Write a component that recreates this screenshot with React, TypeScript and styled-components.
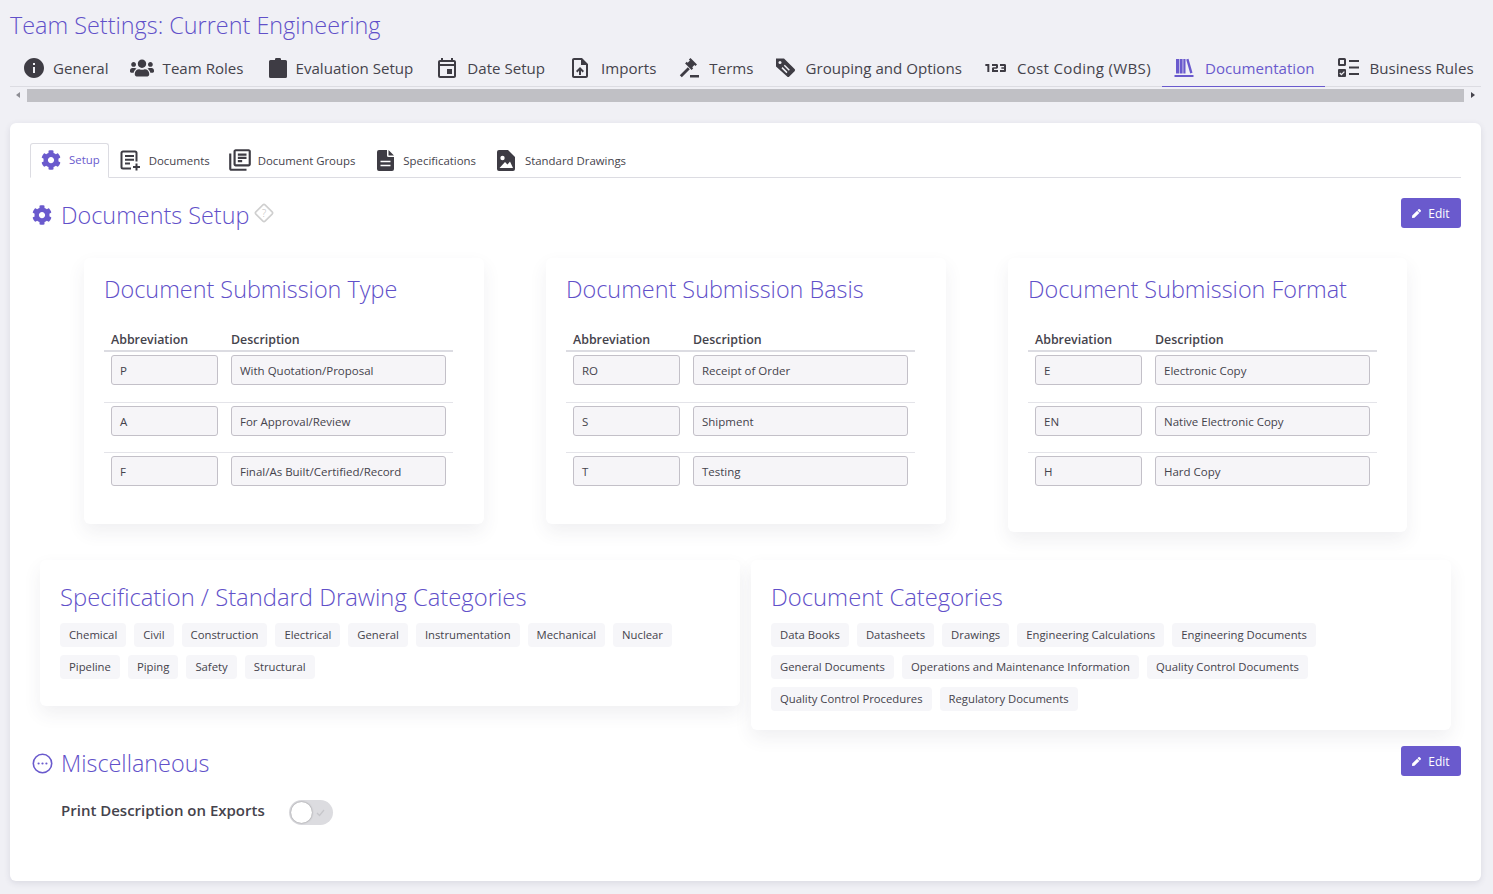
import { ReactNode } from "react";
import styled, { createGlobalStyle } from "styled-components";
import { FaCog, FaUsers, FaPen } from "react-icons/fa";
import { MdInfo, MdOutlineEvent, MdOutlineUploadFile, MdOutlineLibraryBooks, Md123 } from "react-icons/md";

const PURPLE = "#6a5acd";
const TITLE = "#6150c9";
const INK = "#45434c";
const ICON = "#3e3c44";

const GlobalStyle = createGlobalStyle`
  html, body {
    margin: 0;
    height: 100%;
    overflow: hidden;
    background: #f0f0f5;
    font-family: "Open Sans", "Noto Sans", sans-serif;
    color: ${INK};
  }
  * { box-sizing: border-box; }
`;

const Page = styled.div`
  display: flex;
  flex-direction: column;
  height: 894px;
  padding: 10px 12px 0 10px;
`;
const PageTitle = styled.h1`
  margin: 0;
  height: 40px;
  font-size: 23.4px;
  line-height: 31px;
  font-weight: 300;
  color: ${TITLE};
`;
const TopTabs = styled.div`
  display: flex;
  height: 37px;
  padding-left: 2px;
  border-bottom: 1px solid #dcdce2;
`;
const TopTab = styled.div<{ $active?: boolean; $track?: number }>`
  display: flex;
  align-items: center;
  gap: 9px;
  height: 37px;
  padding: 0 11px 1px;
  font-size: 15.1px;
  letter-spacing: ${(p) => p.$track ?? 0}px;
  white-space: nowrap;
  color: ${(p) => (p.$active ? PURPLE : INK)};
  border-bottom: 1px solid ${(p) => (p.$active ? PURPLE : "transparent")};
`;
const IconSlot = styled.span<{ $w: number }>`
  display: flex;
  flex: none;
  align-items: center;
  justify-content: center;
  width: ${(p) => p.$w}px;
  svg { flex: none; }
`;
const ScrollBar = styled.div`
  display: flex;
  align-items: center;
  gap: 7px;
  height: 14px;
  margin: 1px 0 21px;
  padding: 0 6px;
`;
const ScrollArrow = styled.span<{ $right?: boolean }>`
  width: 0;
  height: 0;
  border-top: 3px solid transparent;
  border-bottom: 3px solid transparent;
  border-left: ${(p) => (p.$right ? "4px solid #45434c" : "none")};
  border-right: ${(p) => (p.$right ? "none" : "4px solid #8d8d94")};
`;
const ScrollThumb = styled.div`
  flex: 1;
  height: 13px;
  background: #c0c0c5;
`;
const MainCard = styled.main`
  height: 758px;
  padding: 20px 20px 0;
  background: #fff;
  border-radius: 6px;
  box-shadow: 0 2px 6px rgba(60, 60, 90, 0.12);
`;
const SubTabs = styled.div`
  display: flex;
  height: 35px;
  border-bottom: 1px solid #dcdce2;
`;
const SubTab = styled.div<{ $active?: boolean }>`
  display: flex;
  align-items: center;
  gap: 8px;
  height: 35px;
  padding: 0 8px 2px 10px;
  font-size: 11.4px;
  white-space: nowrap;
  color: ${(p) => (p.$active ? PURPLE : INK)};
  border: 1px solid ${(p) => (p.$active ? "#dcdce2" : "transparent")};
  border-bottom: ${(p) => (p.$active ? "1px solid #fff" : "0")};
  border-radius: 3px 3px 0 0;
`;
const SectionHead = styled.div<{ $top: number }>`
  display: flex;
  align-items: flex-start;
  justify-content: space-between;
  height: 30px;
  margin-top: ${(p) => p.$top}px;
`;
const SectionTitle = styled.h2`
  display: flex;
  align-items: center;
  margin: 0;
  padding-top: 2px;
  font-size: 23.4px;
  line-height: 30px;
  font-weight: 300;
  color: ${TITLE};
`;
const EditButton = styled.button`
  display: flex;
  align-items: center;
  justify-content: center;
  gap: 7px;
  width: 60px;
  height: 30px;
  padding: 0;
  border: 0;
  border-radius: 3px;
  background: ${PURPLE};
  color: #fff;
  font-family: inherit;
  font-size: 12px;
`;
const TableCards = styled.div`
  display: flex;
  align-items: flex-start;
  gap: 62px;
  margin: 30px 0 0 54px;
`;
const Card = styled.section<{ $width: number; $height: number; $pad: number }>`
  flex: none;
  width: ${(p) => p.$width}px;
  height: ${(p) => p.$height}px;
  padding: ${(p) => p.$pad}px 20px 0;
  background: #fff;
  border-radius: 6px;
  box-shadow: 0 8px 18px rgba(60, 60, 90, 0.08);
`;
const CardTitle = styled.h3<{ $size: number }>`
  margin: 0;
  font-size: ${(p) => p.$size}px;
  line-height: 32px;
  font-weight: 300;
  color: ${TITLE};
`;
const TableHead = styled.div`
  display: grid;
  grid-template-columns: 120px 1fr;
  width: 349px;
  height: 23px;
  margin-top: 24px;
  padding: 2px 0 0 7px;
  border-bottom: 2px solid #dcdce2;
  font-size: 12.4px;
  line-height: 18px;
  font-weight: 600;
`;
const Row = styled.div`
  display: grid;
  grid-template-columns: 107px 215px;
  column-gap: 13px;
  width: 349px;
  height: 50px;
  padding: 3px 7px 0;
  & + & { border-top: 1px solid #e4e4e9; }
`;
const Field = styled.div`
  height: 30px;
  padding: 0 8px;
  font-size: 11.5px;
  line-height: 29px;
  background: #f6f5f8;
  border: 1px solid #c3c0c8;
  border-radius: 3px;
`;
const ChipCards = styled.div`
  display: flex;
  align-items: flex-start;
  gap: 11px;
  margin: 28px 0 0 10px;
`;
const Chips = styled.div`
  display: flex;
  flex-wrap: wrap;
  gap: 8px;
  margin-top: 10px;
`;
const Chip = styled.span`
  height: 24px;
  padding: 0 9px;
  font-size: 11.3px;
  line-height: 24px;
  white-space: nowrap;
  background: #f6f6f9;
  border-radius: 4px;
`;
const Setting = styled.div`
  display: flex;
  align-items: flex-start;
  gap: 24px;
  margin: 24px 0 0 31px;
`;
const SettingLabel = styled.span`
  font-size: 15px;
  line-height: 20px;
  font-weight: 600;
`;
const Toggle = styled.span`
  position: relative;
  display: block;
  width: 44px;
  height: 25px;
  background: #dcdce0;
  border-radius: 13px;
`;
const Knob = styled.span`
  position: absolute;
  left: 2px;
  top: 2px;
  width: 21px;
  height: 21px;
  background: #fff;
  border-radius: 50%;
  box-shadow: 0 0 2px rgba(0, 0, 0, 0.45);
`;
const ToggleCheck = styled.svg`
  position: absolute;
  right: 8px;
  top: 9px;
`;

const ClipboardIcon = () => (
  <svg width="18" height="20" viewBox="0 0 18 20" fill={ICON} style={{ marginLeft: 3 }}>
    <path d="M1.5 2H6V1.2A1.2 1.2 0 0 1 7.2 0h3.6A1.2 1.2 0 0 1 12 1.2V2h4.5A1.5 1.5 0 0 1 18 3.5v15a1.5 1.5 0 0 1-1.5 1.5h-15A1.5 1.5 0 0 1 0 18.5v-15A1.5 1.5 0 0 1 1.5 2z" />
  </svg>
);
const GavelIcon = () => (
  <svg width="21" height="21" viewBox="0 0 21 21" fill={ICON}>
    <path d="M11.500 1l6.500 6.500-1.600 1.600-1-1-2.200 2.200 1 1-1.600 1.600-6.500-6.500 1.600-1.600 1 1 2.200-2.200-1-1z" />
    <path d="M8.800 10.200l2 2-8 8-2-2zM11 18h9v2.500h-9z" />
  </svg>
);
const TagIcon = () => (
  <svg width="21" height="21" viewBox="0 0 21 21" fill={ICON}>
    <path d="M1 1.500h8l10.600 10.600a1.600 1.600 0 0 1 0 2.200l-5.300 5.300a1.600 1.600 0 0 1-2.200 0L1 9.500z" />
    <circle cx="5" cy="5.500" r="1.500" fill="#f0f0f5" />
    <path d="M9.300 8.300l5 5M7 10.600l5 5" stroke="#f0f0f5" strokeWidth="1.500" />
  </svg>
);
const BooksIcon = () => (
  <svg width="20" height="20" viewBox="0 0 20 20" fill={PURPLE}>
    <rect x="2" y="1" width="3" height="14.500" />
    <rect x="5.600" y="1" width="3" height="14.500" />
    <path d="M9.300 1h2.200v14.500H9.300zM12.200 1.400l2.300-.7 4 14.100-2.300.7z" />
    <rect x="0.500" y="17" width="19" height="2" />
  </svg>
);
const RulesIcon = () => (
  <svg width="21" height="19" viewBox="0 0 21 19">
    <rect x="1" y="1" width="6" height="6" rx="0.500" fill="none" stroke={ICON} strokeWidth="2" />
    <rect x="0" y="11" width="8" height="8" rx="1" fill={ICON} />
    <path d="M1.800 15l1.600 1.600 3-3" fill="none" stroke="#f0f0f5" strokeWidth="1.300" />
    <path d="M11 3h10M11 9.500h10M11 16h10" stroke={ICON} strokeWidth="2" />
  </svg>
);
const DocAddIcon = () => (
  <svg width="21" height="21" viewBox="0 0 21 21" fill="none" stroke={ICON} strokeWidth="2">
    <path d="M11 18.500H3a1.500 1.500 0 0 1-1.500-1.500V3A1.500 1.500 0 0 1 3 1.500h12A1.500 1.500 0 0 1 16.500 3v8.500" />
    <path d="M5 6h9M5 9.800h9M5 13.500h5M16.500 13.500v7M13 17h7" />
  </svg>
);
const FileLinesIcon = () => (
  <svg width="17" height="21" viewBox="0 0 17 21" fill={ICON}>
    <path d="M2 0h8v5.500A1.500 1.500 0 0 0 11.500 7H17v12a2 2 0 0 1-2 2H2a2 2 0 0 1-2-2V2a2 2 0 0 1 2-2zM11.500 0L17 5.500h-5.500z" />
    <path d="M3.500 11.500h10M3.500 15.500h10" stroke="#fff" strokeWidth="1.700" />
  </svg>
);
const DrawingIcon = () => (
  <svg width="18" height="21" viewBox="0 0 18 21" fill={ICON}>
    <path d="M2 0h9l7 7v12a2 2 0 0 1-2 2H2a2 2 0 0 1-2-2V2a2 2 0 0 1 2-2z" />
    <circle cx="5.500" cy="8" r="2.200" fill="#fff" />
    <path d="M2.500 18l5.500-6 2.500 2.500 2.500-3 3 6.500z" fill="#fff" />
  </svg>
);
const HelpIcon = () => (
  <svg width="22" height="22" viewBox="0 0 22 22" style={{ marginLeft: 4, marginTop: -5 }}>
    <rect x="4.500" y="4.500" width="13" height="13" rx="1.500" transform="rotate(45 11 11)" fill="none" stroke="#cfcfcf" strokeWidth="1.600" />
    <text x="11" y="14.500" textAnchor="middle" fontSize="10" fill="#b9b9b9">?</text>
  </svg>
);
const MoreIcon = () => (
  <svg width="21" height="21" viewBox="0 0 21 21" fill={PURPLE}>
    <circle cx="10.500" cy="10.500" r="9.200" fill="none" stroke={PURPLE} strokeWidth="1.600" />
    <circle cx="6.600" cy="10.500" r="1.100" />
    <circle cx="10.500" cy="10.500" r="1.100" />
    <circle cx="14.400" cy="10.500" r="1.100" />
  </svg>
);

const topTabs: { label: string; icon: ReactNode; slot: number; track?: number; active?: boolean }[] = [
  { label: "General", slot: 21, icon: <MdInfo size={24} color={ICON} /> },
  { label: "Team Roles", slot: 23, icon: <FaUsers size={24} color={ICON} /> },
  { label: "Evaluation Setup", slot: 21, icon: <ClipboardIcon /> },
  { label: "Date Setup", slot: 23, icon: <MdOutlineEvent size={24} color={ICON} /> },
  { label: "Imports", slot: 25, icon: <MdOutlineUploadFile size={24} color={ICON} /> },
  { label: "Terms", slot: 22, icon: <GavelIcon /> },
  { label: "Grouping and Options", slot: 21, icon: <TagIcon /> },
  { label: "Cost Coding (WBS)", slot: 24, track: 0.3, icon: <Md123 size={32} color={ICON} /> },
  { label: "Documentation", slot: 23, icon: <BooksIcon />, active: true },
  { label: "Business Rules", slot: 24, icon: <RulesIcon /> },
];

const subTabs: { label: string; icon: ReactNode; slot: number; active?: boolean }[] = [
  { label: "Setup", slot: 20, icon: <FaCog size={20} color={PURPLE} />, active: true },
  { label: "Documents", slot: 21, icon: <DocAddIcon /> },
  { label: "Document Groups", slot: 20, icon: <MdOutlineLibraryBooks size={26} color={ICON} /> },
  { label: "Specifications", slot: 20, icon: <FileLinesIcon /> },
  { label: "Standard Drawings", slot: 21, icon: <DrawingIcon /> },
];

const submissionCards = [
  {
    title: "Document Submission Type",
    width: 400,
    height: 266,
    rows: [
      ["P", "With Quotation/Proposal"],
      ["A", "For Approval/Review"],
      ["F", "Final/As Built/Certified/Record"],
    ],
  },
  {
    title: "Document Submission Basis",
    width: 400,
    height: 266,
    rows: [
      ["RO", "Receipt of Order"],
      ["S", "Shipment"],
      ["T", "Testing"],
    ],
  },
  {
    title: "Document Submission Format",
    width: 399,
    height: 274,
    rows: [
      ["E", "Electronic Copy"],
      ["EN", "Native Electronic Copy"],
      ["H", "Hard Copy"],
    ],
  },
];

const specCategories = [
  "Chemical", "Civil", "Construction", "Electrical", "General", "Instrumentation",
  "Mechanical", "Nuclear", "Pipeline", "Piping", "Safety", "Structural",
];
const docCategories = [
  "Data Books", "Datasheets", "Drawings", "Engineering Calculations", "Engineering Documents",
  "General Documents", "Operations and Maintenance Information", "Quality Control Documents",
  "Quality Control Procedures", "Regulatory Documents",
];

export default function App() {
  return (
    <Page>
      <GlobalStyle />
      <PageTitle>Team Settings: Current Engineering</PageTitle>
      <TopTabs>
        {topTabs.map((t) => (
          <TopTab key={t.label} $active={t.active} $track={t.track}>
            <IconSlot $w={t.slot}>{t.icon}</IconSlot>
            {t.label}
          </TopTab>
        ))}
      </TopTabs>
      <ScrollBar>
        <ScrollArrow />
        <ScrollThumb />
        <ScrollArrow $right />
      </ScrollBar>
      <MainCard>
        <SubTabs>
          {subTabs.map((t) => (
            <SubTab key={t.label} $active={t.active}>
              <IconSlot $w={t.slot}>{t.icon}</IconSlot>
              {t.label}
            </SubTab>
          ))}
        </SubTabs>
        <SectionHead $top={20}>
          <SectionTitle>
            <IconSlot $w={24}><FaCog size={20} color={PURPLE} /></IconSlot>
            <IconSlot $w={7} />
            Documents Setup
            <HelpIcon />
          </SectionTitle>
          <EditButton><FaPen size={9} />Edit</EditButton>
        </SectionHead>
        <TableCards>
          {submissionCards.map((c) => (
            <Card key={c.title} $width={c.width} $height={c.height} $pad={15}>
              <CardTitle $size={23.4}>{c.title}</CardTitle>
              <TableHead>
                <span>Abbreviation</span>
                <span>Description</span>
              </TableHead>
              {c.rows.map(([abbr, desc]) => (
                <Row key={abbr}>
                  <Field>{abbr}</Field>
                  <Field>{desc}</Field>
                </Row>
              ))}
            </Card>
          ))}
        </TableCards>
        <ChipCards>
          <Card $width={700} $height={146} $pad={21}>
            <CardTitle $size={23.8}>Specification / Standard Drawing Categories</CardTitle>
            <Chips>{specCategories.map((c) => <Chip key={c}>{c}</Chip>)}</Chips>
          </Card>
          <Card $width={700} $height={170} $pad={21}>
            <CardTitle $size={23.8}>Document Categories</CardTitle>
            <Chips>{docCategories.map((c) => <Chip key={c}>{c}</Chip>)}</Chips>
          </Card>
        </ChipCards>
        <SectionHead $top={16}>
          <SectionTitle>
            <IconSlot $w={24}><MoreIcon /></IconSlot>
            <IconSlot $w={7} />
            Miscellaneous
          </SectionTitle>
          <EditButton><FaPen size={9} />Edit</EditButton>
        </SectionHead>
        <Setting>
          <SettingLabel>Print Description on Exports</SettingLabel>
          <Toggle>
            <Knob />
            <ToggleCheck width="9" height="8" viewBox="0 0 9 8" fill="none" stroke="#c6c6ca" strokeWidth="1.200">
              <path d="M1 4l2.500 2.500L8 1" />
            </ToggleCheck>
          </Toggle>
        </Setting>
      </MainCard>
    </Page>
  );
}
